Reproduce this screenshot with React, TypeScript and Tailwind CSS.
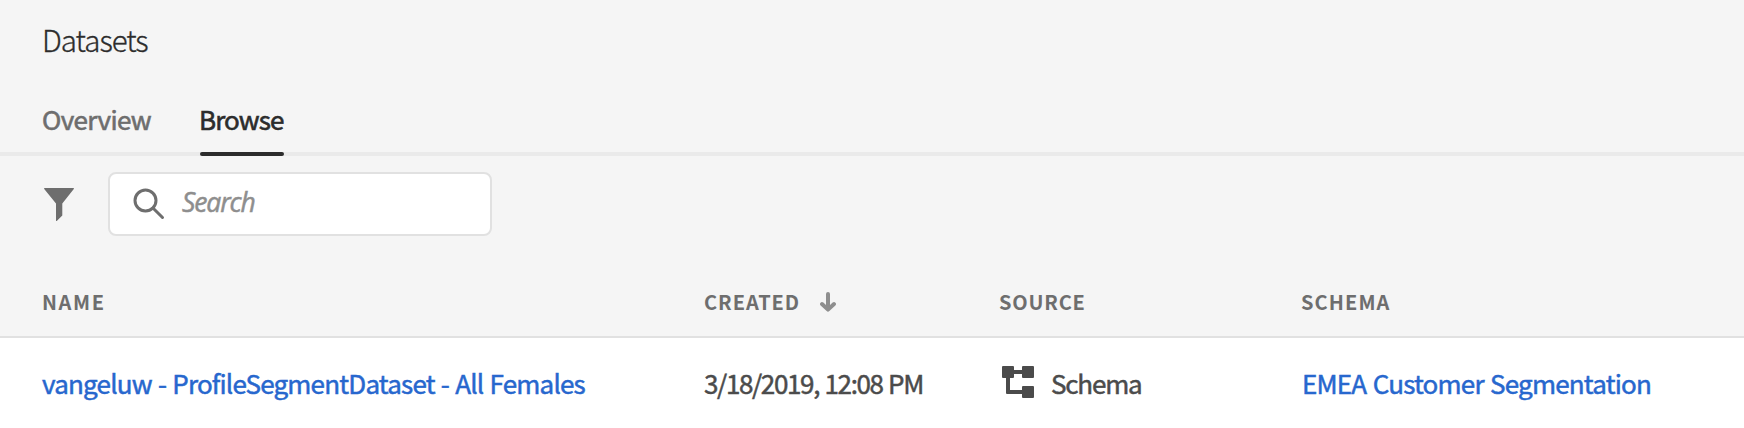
import React from "react";

function FilterIcon() {
  return (
    <svg className="h-[33px] w-[30px] shrink-0 text-[#6e6e6e]" viewBox="0 0 30 33" fill="currentColor">
      <path d="M.6 0h28.8c.5 0 .8.6.4 1L18.3 15.6v12L13 32.8c-.4.4-1 .2-1-.4V15.6L.2 1C-.1.6.1 0 .6 0z" />
    </svg>
  );
}

function SearchIcon() {
  return (
    <svg className="size-8 shrink-0 text-[#6e6e6e]" viewBox="0 0 32 32" fill="none" stroke="currentColor">
      <circle cx="12.5" cy="12.5" r="10.5" strokeWidth="3" />
      <path d="M20.2 20.2 29.5 29.5" strokeWidth="3" strokeLinecap="round" />
    </svg>
  );
}

function SortArrow() {
  return (
    <svg className="h-5 w-4 shrink-0 text-[#8e8e8e]" viewBox="0 0 16 20" fill="none" stroke="currentColor" strokeWidth="4" strokeLinecap="round" strokeLinejoin="round">
      <path d="M8 2v15M2 12l6 5.6 6-5.6" />
    </svg>
  );
}

function SchemaIcon() {
  return (
    <svg className="relative -top-px size-8 shrink-0 text-[#4b4b4b]" viewBox="0 0 32 32" fill="currentColor">
      <rect width="12" height="12" rx="1" />
      <rect x="20" width="12" height="12" rx="1" />
      <rect x="20" y="20" width="12" height="12" rx="1" />
      <path d="M12 4h8v4h-8zM4 12h4v12h12v4H5a1 1 0 0 1-1-1z" />
    </svg>
  );
}

const columns = "grid grid-cols-[662px_296px_302px_1fr] items-center pl-[42px]";

export default function App() {
  return (
    <div className="flex h-[428px] w-full flex-col overflow-hidden bg-[#f5f5f5] font-['Noto_Sans_CJK_SC',sans-serif] whitespace-nowrap">
      <header className="pt-[19px] pl-[42px]">
        <h1 className="text-[29.5px] leading-[40px] font-light tracking-[-1px] text-[#2c2c2c] [-webkit-text-stroke:0.3px]">Datasets</h1>
      </header>
      <nav className="mt-[39px] flex h-[58px] gap-[49px] border-b-4 border-[#eaeaea] pl-[42px] text-[26px] leading-[42px] [-webkit-text-stroke:0.6px]">
        <a className="w-[109px] tracking-[-0.62px] text-[#6e6e6e]">Overview</a>
        <a className="-mb-1 flex w-[84px] flex-col justify-between text-[#2c2c2c]">
          <span className="-ml-px tracking-[-0.9px]">Browse</span>
          <span className="h-1 rounded-full bg-[#2c2c2c]" />
        </a>
      </nav>
      <div className="mt-4 flex h-16 items-center pl-11">
        <FilterIcon />
        <div className="ml-[34px] flex h-16 w-[384px] items-center rounded-lg border-2 border-[#e1e1e1] bg-white pl-[23px]">
          <SearchIcon />
          <span className="ml-[17px] pb-1 font-['Open_Sans',sans-serif] text-[26.5px] leading-[40px] tracking-[-1.1px] text-[#8e8e8e] italic [-webkit-text-stroke:0.5px]">Search</span>
        </div>
      </div>
      <div className={`${columns} mt-[32px] h-[70px] border-b-2 border-[#e1e1e1] text-[20px] leading-[30px] font-bold text-[#6e6e6e]`}>
        <span className="tracking-[1.6px]">NAME</span>
        <span className="flex items-center gap-5"><span className="tracking-[0.95px]">CREATED</span><SortArrow /></span>
        <span className="-ml-px tracking-[0.8px]">SOURCE</span>
        <span className="-ml-px tracking-[1.1px]">SCHEMA</span>
      </div>
      <div className={`${columns} h-[90px] bg-white text-[26px] leading-[40px] text-[#4b4b4b] [-webkit-text-stroke:0.5px]`}>
        <a className="tracking-[-0.8px] text-[#2767ce] [word-spacing:1.1px]">vangeluw - ProfileSegmentDataset - All Females</a>
        <span className="tracking-[-1.36px] [word-spacing:1px]">3/18/2019, 12:08 PM</span>
        <span className="flex items-center gap-[17px] pl-0.5"><SchemaIcon /><span className="tracking-[-1.2px]">Schema</span></span>
        <a className="tracking-[-0.8px] text-[#2767ce] [word-spacing:1.3px]">EMEA Customer Segmentation</a>
      </div>
    </div>
  );
}
